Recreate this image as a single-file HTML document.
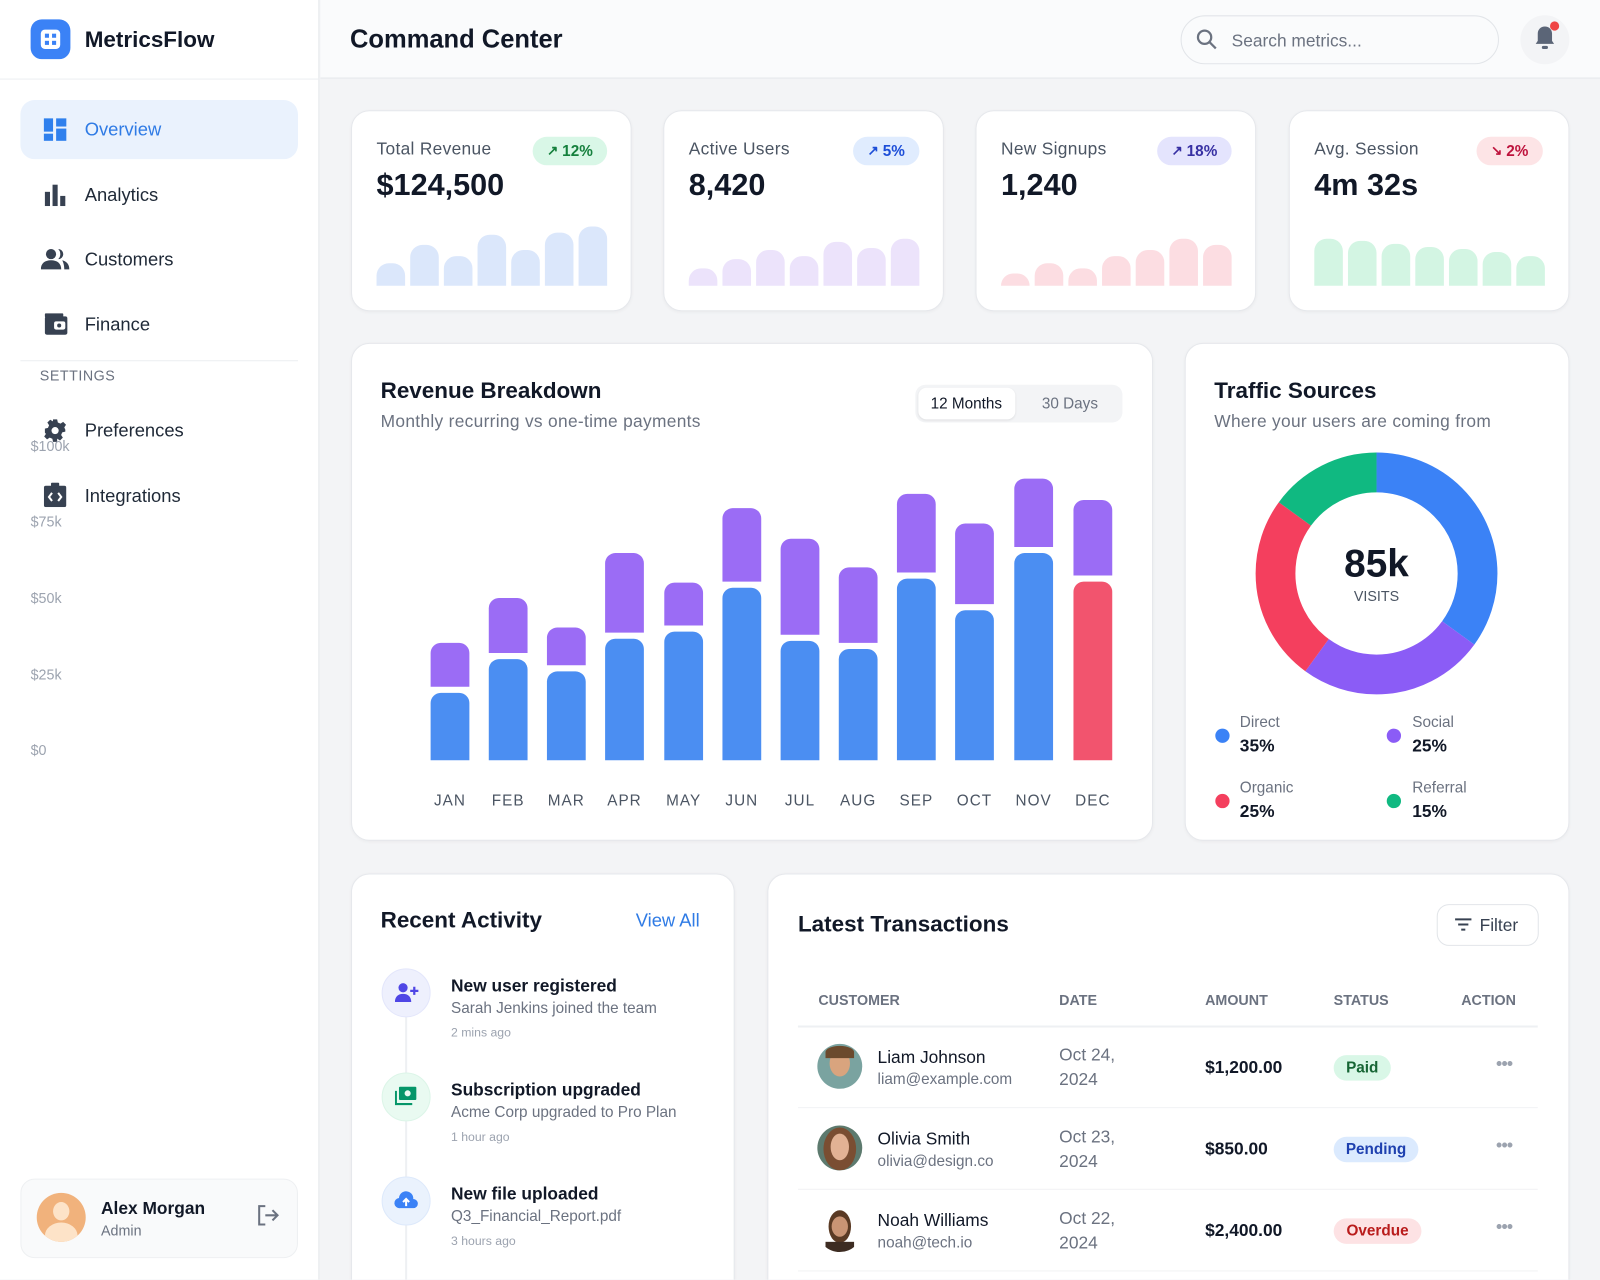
<!DOCTYPE html>
<html><head><meta charset="utf-8"><style>
*{margin:0;padding:0;box-sizing:border-box}
html{overflow:hidden;width:1600px;height:1280px}
body{width:1600px;height:1280px;overflow:hidden;background:#f3f4f6;font-family:"Liberation Sans",sans-serif;color:#111827}
#w{position:absolute;left:0;top:0;width:1568px;height:1254px;overflow:hidden;transform:scale(1.020408);transform-origin:0 0;background:#f3f4f6}
.a{position:absolute}
.t{position:absolute;white-space:nowrap;line-height:1;transform:translateY(-50%)}
.card{position:absolute;background:#fff;border:1px solid #e6e8ec;border-radius:18px;box-shadow:0 1px 3px rgba(0,0,0,.04)}
.b{font-weight:700}
.sb{position:absolute;bottom:0;width:28px;border-radius:12px 12px 0 0}
.rb{position:absolute;width:38px;border-radius:10px 10px 0 0}
.badge{position:absolute;height:28px;border-radius:14px;font-size:15px;font-weight:700;display:flex;align-items:center;justify-content:center;gap:4px}
</style></head><body><div id="w">
<div class="a" style="left:0;top:0;width:313px;height:1254px;background:#fff;border-right:1px solid #e5e7eb"></div>
<div class="a" style="left:0;top:77px;width:313px;height:1px;background:#eceef1"></div>
<div class="a" style="left:30px;top:19px;width:39px;height:39px;border-radius:11px;background:#3b82f6"></div>
<div class="a" style="left:40px;top:29px;width:19px;height:19px;border-radius:4px;background:#fff"></div>
<div class="a" style="left:44px;top:33px;width:4px;height:4px;background:#3b82f6"></div><div class="a" style="left:51px;top:33px;width:4px;height:4px;background:#3b82f6"></div><div class="a" style="left:44px;top:40px;width:4px;height:4px;background:#3b82f6"></div><div class="a" style="left:51px;top:40px;width:4px;height:4px;background:#3b82f6"></div>
<div class="t b" style="left:83px;top:39px;font-size:22px">MetricsFlow</div>
<div class="a" style="left:20px;top:98px;width:272px;height:58px;border-radius:14px;background:#eaf2fd"></div>
<svg class="a" style="left:42px;top:115px" width="24" height="24" viewBox="0 0 24 24" fill="#2f80ed"><rect x="1" y="1" width="9" height="13"/><rect x="13" y="1" width="10" height="8"/><rect x="1" y="16" width="9" height="7"/><rect x="13" y="11" width="10" height="12"/></svg>
<div class="t" style="left:83px;top:127px;font-size:18px;color:#2f7be5">Overview</div>
<svg class="a" style="left:43px;top:180px" width="22" height="22" viewBox="0 0 22 22" fill="#374151"><rect x="1" y="8" width="5" height="14"/><rect x="8.5" y="1" width="5" height="21"/><rect x="16" y="12" width="5" height="10"/></svg>
<div class="t" style="left:83px;top:191px;font-size:18px;color:#1f2937">Analytics</div>
<svg class="a" style="left:40px;top:243px" width="28" height="22" viewBox="0 0 28 22" fill="#374151"><circle cx="10" cy="6" r="5"/><path d="M0 21c0-6 4-9 10-9s10 3 10 9z"/><path d="M17 1a5 5 0 0 1 0 10 7 7 0 0 0 0-10zM21 12c4 1 7 4 7 9h-5c0-4-1-7-2-9z"/></svg>
<div class="t" style="left:83px;top:254px;font-size:18px;color:#1f2937">Customers</div>
<svg class="a" style="left:43px;top:307px" width="24" height="22" viewBox="0 0 24 22"><rect x="1" y="3" width="22" height="18" rx="2" fill="#374151"/><rect x="1" y="0" width="18" height="4" rx="1" fill="#374151"/><rect x="10" y="8" width="11" height="8" rx="2" fill="#fff"/><circle cx="15" cy="12" r="2" fill="#374151"/></svg>
<div class="t" style="left:83px;top:318px;font-size:18px;color:#1f2937">Finance</div>
<div class="a" style="left:20px;top:353px;width:272px;height:1px;background:#eceef1"></div>
<div class="t" style="left:39px;top:368px;font-size:14px;color:#6b7280;letter-spacing:.5px">SETTINGS</div>
<svg class="a" style="left:42px;top:410px" width="24" height="24" viewBox="0 0 24 24" fill="#374151"><path d="M10 1h4l.7 3 2.6 1.1 2.6-1.7 2.8 2.8-1.7 2.6L22 11v2l-3 .7-1.1 2.6 1.7 2.6-2.8 2.8-2.6-1.7L14 20v3h-4l-.7-3-2.6-1.1-2.6 1.7-2.8-2.8 1.7-2.6L2 14v-4l3-.7 1.1-2.6-1.7-2.6 2.8-2.8 2.6 1.7L10 1z"/><circle cx="12" cy="12" r="3.5" fill="#fff"/></svg>
<div class="t" style="left:83px;top:422px;font-size:18px;color:#1f2937">Preferences</div>
<svg class="a" style="left:43px;top:473px" width="22" height="24" viewBox="0 0 22 24"><rect x="0" y="3" width="22" height="21" rx="2" fill="#374151"/><rect x="7" y="0" width="8" height="5" rx="1" fill="#374151"/><path d="M8 10l-3 4 3 4M14 10l3 4-3 4" stroke="#fff" stroke-width="2" fill="none"/></svg>
<div class="t" style="left:83px;top:486px;font-size:18px;color:#1f2937">Integrations</div>
<div class="t" style="left:30px;top:437px;font-size:14px;color:#9ca3af">$100k</div>
<div class="t" style="left:30px;top:511px;font-size:14px;color:#9ca3af">$75k</div>
<div class="t" style="left:30px;top:586px;font-size:14px;color:#9ca3af">$50k</div>
<div class="t" style="left:30px;top:661px;font-size:14px;color:#9ca3af">$25k</div>
<div class="t" style="left:30px;top:735px;font-size:14px;color:#9ca3af">$0</div>
<div class="a" style="left:20px;top:1155px;width:272px;height:78px;border-radius:14px;background:#f9fafb;border:1px solid #eef0f2"></div>
<div class="a" style="left:36px;top:1169px;width:48px;height:48px;border-radius:50%;background:#f1b27c;overflow:hidden"><div class="a" style="left:16px;top:9px;width:16px;height:18px;border-radius:50%;background:#fde3c8"></div><div class="a" style="left:8px;top:29px;width:32px;height:26px;border-radius:50%;background:#fde3c8"></div></div>
<div class="t b" style="left:99px;top:1184px;font-size:17px;color:#111827">Alex Morgan</div>
<div class="t" style="left:99px;top:1206px;font-size:14px;color:#6b7280">Admin</div>
<svg class="a" style="left:250px;top:1179px" width="24" height="24" viewBox="0 0 24 24" fill="none" stroke="#6b7280" stroke-width="2"><path d="M10 3H4v18h6M10 12h11M17 7l5 5-5 5"/></svg>
<div class="a" style="left:314px;top:0;width:1254px;height:77px;background:#fafbfc;border-bottom:1px solid #e5e7eb"></div>
<div class="t b" style="left:343px;top:39px;font-size:25px">Command Center</div>
<div class="a" style="left:1157px;top:15px;width:312px;height:48px;border-radius:24px;border:1px solid #e2e5e9;background:#fafbfc"></div>
<svg class="a" style="left:1172px;top:28px" width="22" height="22" viewBox="0 0 22 22" fill="none" stroke="#6b7280" stroke-width="2.2"><circle cx="8.5" cy="8.5" r="6.5"/><path d="M13.5 13.5l6 6"/></svg>
<div class="t" style="left:1207px;top:40px;font-size:17px;color:#6b7280">Search metrics...</div>
<div class="a" style="left:1490px;top:15px;width:48px;height:48px;border-radius:50%;background:#f3f4f6"></div>
<svg class="a" style="left:1503px;top:24px" width="22" height="26" viewBox="0 0 22 26" fill="#5b6577"><path d="M11 2c-4 0-7 3-7 7v7l-2 3h18l-2-3V9c0-4-3-7-7-7z"/><rect x="8" y="21" width="6" height="3" rx="1.5"/></svg>
<div class="a" style="left:1519px;top:21px;width:9px;height:9px;border-radius:50%;background:#ef4444"></div>
<div class="card" style="left:344px;top:108px;width:275px;height:197px"></div>
<div class="card" style="left:650px;top:108px;width:275px;height:197px"></div>
<div class="card" style="left:956px;top:108px;width:275px;height:197px"></div>
<div class="card" style="left:1263px;top:108px;width:275px;height:197px"></div>
<div class="t" style="left:369px;top:146px;font-size:17px;color:#4b5563;letter-spacing:.3px">Total Revenue</div>
<div class="t" style="left:675px;top:146px;font-size:17px;color:#4b5563;letter-spacing:.3px">Active Users</div>
<div class="t" style="left:981px;top:146px;font-size:17px;color:#4b5563;letter-spacing:.3px">New Signups</div>
<div class="t" style="left:1288px;top:146px;font-size:17px;color:#4b5563;letter-spacing:.3px">Avg. Session</div>
<div class="t b" style="left:369px;top:182px;font-size:30px">$124,500</div>
<div class="t b" style="left:675px;top:182px;font-size:30px">8,420</div>
<div class="t b" style="left:981px;top:182px;font-size:30px">1,240</div>
<div class="t b" style="left:1288px;top:182px;font-size:30px">4m 32s</div>
<div class="badge" style="left:522px;top:134px;width:73px;background:#d9f7e7;color:#15803d"><span style="font-size:13px">↗</span>12%</div>
<div class="badge" style="left:836px;top:134px;width:65px;background:#e0ecfe;color:#1d4ed8"><span style="font-size:13px">↗</span>5%</div>
<div class="badge" style="left:1134px;top:134px;width:73px;background:#e4e4fd;color:#3730a3"><span style="font-size:13px">↗</span>18%</div>
<div class="badge" style="left:1447px;top:134px;width:65px;background:#fde4e6;color:#be123c"><span style="font-size:13px">↘</span>2%</div>
<div class="a" style="left:369px;top:210px;width:226px;height:70px">
<div class="sb" style="left:0;height:22px;background:#dbe7fb"></div><div class="sb" style="left:33px;height:40px;background:#dbe7fb"></div><div class="sb" style="left:66px;height:29px;background:#dbe7fb"></div><div class="sb" style="left:99px;height:50px;background:#dbe7fb"></div><div class="sb" style="left:132px;height:35px;background:#dbe7fb"></div><div class="sb" style="left:165px;height:52px;background:#dbe7fb"></div><div class="sb" style="left:198px;height:58px;background:#dbe7fb"></div></div>
<div class="a" style="left:675px;top:210px;width:226px;height:70px">
<div class="sb" style="left:0;height:17px;background:#ece3fb"></div><div class="sb" style="left:33px;height:26px;background:#ece3fb"></div><div class="sb" style="left:66px;height:35px;background:#ece3fb"></div><div class="sb" style="left:99px;height:29px;background:#ece3fb"></div><div class="sb" style="left:132px;height:43px;background:#ece3fb"></div><div class="sb" style="left:165px;height:37px;background:#ece3fb"></div><div class="sb" style="left:198px;height:46px;background:#ece3fb"></div></div>
<div class="a" style="left:981px;top:210px;width:226px;height:70px">
<div class="sb" style="left:0;height:12px;background:#fcdde2"></div><div class="sb" style="left:33px;height:22px;background:#fcdde2"></div><div class="sb" style="left:66px;height:17px;background:#fcdde2"></div><div class="sb" style="left:99px;height:29px;background:#fcdde2"></div><div class="sb" style="left:132px;height:35px;background:#fcdde2"></div><div class="sb" style="left:165px;height:46px;background:#fcdde2"></div><div class="sb" style="left:198px;height:40px;background:#fcdde2"></div></div>
<div class="a" style="left:1288px;top:210px;width:226px;height:70px">
<div class="sb" style="left:0;height:46px;background:#d3f5e3"></div><div class="sb" style="left:33px;height:44px;background:#d3f5e3"></div><div class="sb" style="left:66px;height:41px;background:#d3f5e3"></div><div class="sb" style="left:99px;height:38px;background:#d3f5e3"></div><div class="sb" style="left:132px;height:36px;background:#d3f5e3"></div><div class="sb" style="left:165px;height:33px;background:#d3f5e3"></div><div class="sb" style="left:198px;height:29px;background:#d3f5e3"></div></div>
<div class="card" style="left:344px;top:336px;width:786px;height:488px"></div>
<div class="t b" style="left:373px;top:383px;font-size:22px">Revenue Breakdown</div>
<div class="t" style="left:373px;top:413px;font-size:17px;color:#6b7280;letter-spacing:.3px">Monthly recurring vs one-time payments</div>
<div class="a" style="left:897px;top:377px;width:203px;height:37px;border-radius:10px;background:#f3f4f6"></div>
<div class="a" style="left:900px;top:380px;width:95px;height:31px;border-radius:8px;background:#fff;box-shadow:0 1px 2px rgba(0,0,0,.08)"></div>
<div class="t" style="left:912px;top:396px;font-size:15px;color:#111827">12 Months</div>
<div class="t" style="left:1021px;top:396px;font-size:15px;color:#6b7280">30 Days</div>
<div class="card" style="left:1161px;top:336px;width:377px;height:488px"></div>
<div class="t b" style="left:1190px;top:383px;font-size:22px">Traffic Sources</div>
<div class="t" style="left:1190px;top:413px;font-size:17px;color:#6b7280;letter-spacing:.3px">Where your users are coming from</div>
<svg class="a" style="left:1229px;top:442px" width="240" height="240" viewBox="0 0 240 240"><g transform="rotate(-90 120 120)" fill="none" stroke-width="39">
<circle cx="120" cy="120" r="99" stroke="#3b82f6" stroke-dasharray="217.7 1000" stroke-dashoffset="0"/>
<circle cx="120" cy="120" r="99" stroke="#8b5cf6" stroke-dasharray="155.5 1000" stroke-dashoffset="-217.7"/>
<circle cx="120" cy="120" r="99" stroke="#f43f5e" stroke-dasharray="155.5 1000" stroke-dashoffset="-373.2"/>
<circle cx="120" cy="120" r="99" stroke="#10b981" stroke-dasharray="93.3 1000" stroke-dashoffset="-528.7"/></g></svg>
<div class="t b" style="left:1349px;top:553px;font-size:38px;transform:translate(-50%,-50%)">85k</div>
<div class="t" style="left:1349px;top:584px;font-size:14px;color:#4b5563;transform:translate(-50%,-50%)">VISITS</div>
<div class="a" style="left:1191px;top:714px;width:14px;height:14px;border-radius:50%;background:#3b82f6"></div>
<div class="a" style="left:1359px;top:714px;width:14px;height:14px;border-radius:50%;background:#8b5cf6"></div>
<div class="a" style="left:1191px;top:778px;width:14px;height:14px;border-radius:50%;background:#f43f5e"></div>
<div class="a" style="left:1359px;top:778px;width:14px;height:14px;border-radius:50%;background:#10b981"></div>
<div class="t" style="left:1215px;top:708px;font-size:15px;color:#6b7280">Direct</div><div class="t b" style="left:1215px;top:731px;font-size:17px">35%</div>
<div class="t" style="left:1384px;top:708px;font-size:15px;color:#6b7280">Social</div><div class="t b" style="left:1384px;top:731px;font-size:17px">25%</div>
<div class="t" style="left:1215px;top:772px;font-size:15px;color:#6b7280">Organic</div><div class="t b" style="left:1215px;top:795px;font-size:17px">25%</div>
<div class="t" style="left:1384px;top:772px;font-size:15px;color:#6b7280">Referral</div><div class="t b" style="left:1384px;top:795px;font-size:17px">15%</div>
<div class="card" style="left:344px;top:856px;width:376px;height:460px"></div>
<div class="t b" style="left:373px;top:902px;font-size:22px">Recent Activity</div>
<div class="t" style="left:623px;top:902px;font-size:18px;color:#2f7be5">View All</div>
<div class="a" style="left:397px;top:990px;width:2px;height:300px;background:#eef0f3"></div>
<div class="a" style="left:374px;top:949px;width:48px;height:48px;border-radius:50%;background:#eef0fd;border:1px solid #e3e6fb"></div>
<svg class="a" style="left:387px;top:963px" width="24" height="20" viewBox="0 0 24 20" fill="#4f46e5"><circle cx="8" cy="5" r="4.5"/><path d="M0 19c0-5 3-8 8-8s8 3 8 8z"/><path d="M19 4v8M15 8h8" stroke="#4f46e5" stroke-width="2.2"/></svg>
<div class="a" style="left:374px;top:1051px;width:48px;height:48px;border-radius:50%;background:#e9faf1;border:1px solid #dcf5e8"></div>
<svg class="a" style="left:387px;top:1064px" width="22" height="20" viewBox="0 0 22 20"><rect x="4" y="1" width="17" height="13" rx="1" fill="#059669"/><circle cx="12.5" cy="7.5" r="3" fill="#e9faf1"/><path d="M1 5v13h16" stroke="#059669" stroke-width="2" fill="none"/></svg>
<div class="a" style="left:374px;top:1153px;width:48px;height:48px;border-radius:50%;background:#eaf2fd;border:1px solid #dde9fb"></div>
<svg class="a" style="left:386px;top:1166px" width="24" height="20" viewBox="0 0 24 20" fill="#3b82f6"><path d="M6 18a5 5 0 0 1-1-10 7 7 0 0 1 14 1 4.5 4.5 0 0 1 0 9z"/><path d="M12 16V9M9 12l3-3 3 3" stroke="#fff" stroke-width="2" fill="none"/></svg>
<div class="t" style="left:442px;top:966px;font-size:17px;font-weight:700;color:#111827">New user registered</div>
<div class="t" style="left:442px;top:988px;font-size:15px;color:#6b7280">Sarah Jenkins joined the team</div>
<div class="t" style="left:442px;top:1012px;font-size:12px;color:#9ca3af">2 mins ago</div>
<div class="t" style="left:442px;top:1068px;font-size:17px;font-weight:700;color:#111827">Subscription upgraded</div>
<div class="t" style="left:442px;top:1090px;font-size:15px;color:#6b7280">Acme Corp upgraded to Pro Plan</div>
<div class="t" style="left:442px;top:1114px;font-size:12px;color:#9ca3af">1 hour ago</div>
<div class="t" style="left:442px;top:1170px;font-size:17px;font-weight:700;color:#111827">New file uploaded</div>
<div class="t" style="left:442px;top:1192px;font-size:15px;color:#6b7280">Q3_Financial_Report.pdf</div>
<div class="t" style="left:442px;top:1216px;font-size:12px;color:#9ca3af">3 hours ago</div>
<div class="card" style="left:752px;top:856px;width:786px;height:460px"></div>
<div class="t b" style="left:782px;top:906px;font-size:22px">Latest Transactions</div>
<div class="a" style="left:1408px;top:886px;width:100px;height:41px;border-radius:12px;border:1px solid #e2e5e9;background:#fff"></div>
<svg class="a" style="left:1425px;top:899px" width="18" height="14" viewBox="0 0 18 14" stroke="#374151" stroke-width="2"><path d="M1 2h16M4 7h10M7 12h4"/></svg>
<div class="t" style="left:1450px;top:907px;font-size:17px;color:#374151">Filter</div>
<div class="t b" style="left:802px;top:980px;font-size:14px;color:#6b7280">CUSTOMER</div>
<div class="t b" style="left:1038px;top:980px;font-size:14px;color:#6b7280">DATE</div>
<div class="t b" style="left:1181px;top:980px;font-size:14px;color:#6b7280">AMOUNT</div>
<div class="t b" style="left:1307px;top:980px;font-size:14px;color:#6b7280">STATUS</div>
<div class="t b" style="left:1432px;top:980px;font-size:14px;color:#6b7280">ACTION</div>
<div class="a" style="left:782px;top:1005px;width:725px;height:2px;background:#eef0f3"></div>
<div class="a" style="left:782px;top:1085px;width:725px;height:1px;background:#f1f2f4"></div>
<div class="a" style="left:782px;top:1165px;width:725px;height:1px;background:#f1f2f4"></div>
<div class="a" style="left:782px;top:1245px;width:725px;height:1px;background:#f1f2f4"></div>
<div class="a" style="left:801px;top:1023px;width:44px;height:44px;border-radius:50%;background:#7aa3a0;overflow:hidden"><div class="a" style="left:12px;top:6px;width:20px;height:26px;border-radius:50%;background:#d9a47e"></div><div class="a" style="left:8px;top:2px;width:28px;height:12px;border-radius:50% 50% 0 0;background:#6b4a2d"></div></div>
<div class="a" style="left:801px;top:1103px;width:44px;height:44px;border-radius:50%;background:#5d7a6e;overflow:hidden"><div class="a" style="left:6px;top:2px;width:32px;height:42px;border-radius:50%;background:#7a4e32"></div><div class="a" style="left:13px;top:8px;width:18px;height:26px;border-radius:50%;background:#e2b294"></div></div>
<div class="a" style="left:801px;top:1183px;width:44px;height:44px;border-radius:50%;background:#fff;overflow:hidden"><div class="a" style="left:11px;top:3px;width:22px;height:32px;border-radius:50%;background:#5a3a24"></div><div class="a" style="left:14px;top:9px;width:16px;height:20px;border-radius:50%;background:#c99474"></div><div class="a" style="left:8px;top:34px;width:28px;height:12px;background:#3d2c22"></div></div>
<div class="t" style="left:860px;top:1036px;font-size:17px;color:#111827">Liam Johnson</div>
<div class="t" style="left:860px;top:1058px;font-size:15px;color:#6b7280">liam@example.com</div>
<div class="t" style="left:860px;top:1116px;font-size:17px;color:#111827">Olivia Smith</div>
<div class="t" style="left:860px;top:1138px;font-size:15px;color:#6b7280">olivia@design.co</div>
<div class="t" style="left:860px;top:1196px;font-size:17px;color:#111827">Noah Williams</div>
<div class="t" style="left:860px;top:1218px;font-size:15px;color:#6b7280">noah@tech.io</div>
<div class="t" style="left:1038px;top:1034px;font-size:17px;color:#6b7280">Oct 24,</div><div class="t" style="left:1038px;top:1058px;font-size:17px;color:#6b7280">2024</div>
<div class="t" style="left:1038px;top:1114px;font-size:17px;color:#6b7280">Oct 23,</div><div class="t" style="left:1038px;top:1138px;font-size:17px;color:#6b7280">2024</div>
<div class="t" style="left:1038px;top:1194px;font-size:17px;color:#6b7280">Oct 22,</div><div class="t" style="left:1038px;top:1218px;font-size:17px;color:#6b7280">2024</div>
<div class="t b" style="left:1181px;top:1046px;font-size:17px">$1,200.00</div>
<div class="t b" style="left:1181px;top:1126px;font-size:17px">$850.00</div>
<div class="t b" style="left:1181px;top:1206px;font-size:17px">$2,400.00</div>
<div class="badge" style="left:1307px;top:1034px;width:56px;height:25px;background:#d9f7e7;color:#166534">Paid</div>
<div class="badge" style="left:1307px;top:1114px;width:83px;height:25px;background:#dbeafe;color:#1e40af">Pending</div>
<div class="badge" style="left:1307px;top:1194px;width:86px;height:25px;background:#fde2e4;color:#b91c1c">Overdue</div>
<div class="t" style="left:1466px;top:1042px;font-size:18px;color:#9ca3af;letter-spacing:-1px">•••</div>
<div class="t" style="left:1466px;top:1122px;font-size:18px;color:#9ca3af;letter-spacing:-1px">•••</div>
<div class="t" style="left:1466px;top:1202px;font-size:18px;color:#9ca3af;letter-spacing:-1px">•••</div>
<div class="rb" style="left:422px;top:630px;height:43px;background:#9b6cf5"></div><div class="rb" style="left:422px;top:679px;height:66px;background:#4b8ef2"></div>
<div class="rb" style="left:479px;top:586px;height:54px;background:#9b6cf5"></div><div class="rb" style="left:479px;top:646px;height:99px;background:#4b8ef2"></div>
<div class="rb" style="left:536px;top:615px;height:37px;background:#9b6cf5"></div><div class="rb" style="left:536px;top:658px;height:87px;background:#4b8ef2"></div>
<div class="rb" style="left:593px;top:542px;height:78px;background:#9b6cf5"></div><div class="rb" style="left:593px;top:626px;height:119px;background:#4b8ef2"></div>
<div class="rb" style="left:651px;top:571px;height:42px;background:#9b6cf5"></div><div class="rb" style="left:651px;top:619px;height:126px;background:#4b8ef2"></div>
<div class="rb" style="left:708px;top:498px;height:72px;background:#9b6cf5"></div><div class="rb" style="left:708px;top:576px;height:169px;background:#4b8ef2"></div>
<div class="rb" style="left:765px;top:528px;height:94px;background:#9b6cf5"></div><div class="rb" style="left:765px;top:628px;height:117px;background:#4b8ef2"></div>
<div class="rb" style="left:822px;top:556px;height:74px;background:#9b6cf5"></div><div class="rb" style="left:822px;top:636px;height:109px;background:#4b8ef2"></div>
<div class="rb" style="left:879px;top:484px;height:77px;background:#9b6cf5"></div><div class="rb" style="left:879px;top:567px;height:178px;background:#4b8ef2"></div>
<div class="rb" style="left:936px;top:513px;height:79px;background:#9b6cf5"></div><div class="rb" style="left:936px;top:598px;height:147px;background:#4b8ef2"></div>
<div class="rb" style="left:994px;top:469px;height:67px;background:#9b6cf5"></div><div class="rb" style="left:994px;top:542px;height:203px;background:#4b8ef2"></div>
<div class="rb" style="left:1052px;top:490px;height:74px;background:#9b6cf5"></div><div class="rb" style="left:1052px;top:570px;height:175px;background:#f2546e"></div>
<div class="t" style="left:441px;top:785px;font-size:15px;color:#4b5563;letter-spacing:1px;transform:translate(-50%,-50%)">JAN</div>
<div class="t" style="left:498px;top:785px;font-size:15px;color:#4b5563;letter-spacing:1px;transform:translate(-50%,-50%)">FEB</div>
<div class="t" style="left:555px;top:785px;font-size:15px;color:#4b5563;letter-spacing:1px;transform:translate(-50%,-50%)">MAR</div>
<div class="t" style="left:612px;top:785px;font-size:15px;color:#4b5563;letter-spacing:1px;transform:translate(-50%,-50%)">APR</div>
<div class="t" style="left:670px;top:785px;font-size:15px;color:#4b5563;letter-spacing:1px;transform:translate(-50%,-50%)">MAY</div>
<div class="t" style="left:727px;top:785px;font-size:15px;color:#4b5563;letter-spacing:1px;transform:translate(-50%,-50%)">JUN</div>
<div class="t" style="left:784px;top:785px;font-size:15px;color:#4b5563;letter-spacing:1px;transform:translate(-50%,-50%)">JUL</div>
<div class="t" style="left:841px;top:785px;font-size:15px;color:#4b5563;letter-spacing:1px;transform:translate(-50%,-50%)">AUG</div>
<div class="t" style="left:898px;top:785px;font-size:15px;color:#4b5563;letter-spacing:1px;transform:translate(-50%,-50%)">SEP</div>
<div class="t" style="left:955px;top:785px;font-size:15px;color:#4b5563;letter-spacing:1px;transform:translate(-50%,-50%)">OCT</div>
<div class="t" style="left:1013px;top:785px;font-size:15px;color:#4b5563;letter-spacing:1px;transform:translate(-50%,-50%)">NOV</div>
<div class="t" style="left:1071px;top:785px;font-size:15px;color:#4b5563;letter-spacing:1px;transform:translate(-50%,-50%)">DEC</div>
</div></body></html>
